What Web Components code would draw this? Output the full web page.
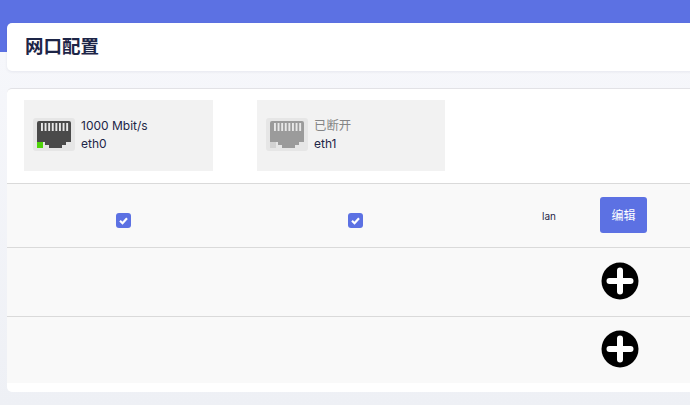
<!DOCTYPE html>
<html lang="zh">
<head>
<meta charset="utf-8">
<title>网口配置</title>
<style>
  html, body { margin: 0; padding: 0; height: 100%; overflow: hidden; }
  body { font-family: Inter, "Noto Sans CJK SC", sans-serif; color: #1d2547; }
</style>
</head>
<body>
<net-page>
  <title-card>网口配置</title-card>
  <main-card>
    <port-strip>
      <port-card speed="1000 Mbit/s" name="eth0"></port-card>
      <port-card speed="已断开" name="eth1" down></port-card>
    </port-strip>
    <config-row style="--row-h: 63px">
      <check-box></check-box>
      <check-box></check-box>
      <zone-label>lan</zone-label>
      <edit-button>编辑</edit-button>
    </config-row>
    <config-row style="--row-h: 68px"><add-button></add-button></config-row>
    <config-row style="--row-h: 66px"><add-button></add-button></config-row>
  </main-card>
</net-page>

<script>
class NetPage extends HTMLElement {
    constructor() {
        super();
        this.attachShadow({ mode: 'open' }).innerHTML = `
            <style>
                :host {
                    display: flex;
                    flex-direction: column;
                    gap: 17px;
                    box-sizing: border-box;
                    width: 690px;
                    height: 405px;
                    padding: 23px 0 0 7px;
                    overflow: hidden;
                    background: linear-gradient(#5c71e3 52px, #f6f7fb 52px, #eef0f5 405px);
                }
            </style>
            <slot></slot>
        `;
    }
}

class TitleCard extends HTMLElement {
    constructor() {
        super();
        this.attachShadow({ mode: 'open' }).innerHTML = `
            <style>
                :host {
                    display: flex;
                    align-items: center;
                    box-sizing: border-box;
                    height: 48px;
                    margin-right: -8px;
                    padding: 0 0 4px 18px;
                    background: #fff;
                    border-radius: 5px;
                    box-shadow: 0 1px 3px rgba(50, 50, 93, 0.08);
                    font-size: 18.5px;
                    font-weight: 700;
                    color: #1d2547;
                }
            </style>
            <slot></slot>
        `;
    }
}

class MainCard extends HTMLElement {
    constructor() {
        super();
        this.attachShadow({ mode: 'open' }).innerHTML = `
            <style>
                :host {
                    display: block;
                    box-sizing: border-box;
                    height: 304px;
                    margin-right: -8px;
                    padding-bottom: 9px;
                    background: #fff;
                    border-top: 1px solid #e2e2e6;
                    border-radius: 5px;
                }
            </style>
            <slot></slot>
        `;
    }
}

class PortStrip extends HTMLElement {
    constructor() {
        super();
        this.attachShadow({ mode: 'open' }).innerHTML = `
            <style>
                :host {
                    display: flex;
                    gap: 44px;
                    padding: 11px 0 12px 17px;
                }
            </style>
            <slot></slot>
        `;
    }
}

class PortCard extends HTMLElement {
    constructor() {
        super();
        const down = this.hasAttribute('down');
        const body = down ? '#9b9b9b' : '#4a4a4a';
        const led = down ? '#d2d2d2' : '#4fd40a';
        const bars = [0, 1, 2, 3, 4, 5, 6, 7]
            .map(i => `<rect x="${8 + i * 3.6}" y="5" width="1.9" height="8" fill="#e8e8e8"/>`)
            .join('');
        this.attachShadow({ mode: 'open' }).innerHTML = `
            <style>
                :host {
                    display: flex;
                    align-items: center;
                    gap: 6px;
                    box-sizing: border-box;
                    width: ${down ? 188 : 189}px;
                    height: 71px;
                    padding: 0 0 2px 9px;
                    background: #f2f2f2;
                }
                svg { display: block; flex: none; }
                .text { display: flex; flex-direction: column; gap: 2px; margin-top: 1px; font-size: 12px; line-height: 16px; }
                .speed { color: ${down ? '#858585' : '#1d2547'}; font-size: ${down ? 12.4 : 12}px; }
                .name { color: #1d2547; }
            </style>
            <svg width="42" height="33" viewBox="0 0 42 33">
                <rect width="42" height="33" rx="3" fill="#e6e6e6"/>
                <path d="M4,5 Q4,3 6,3 H36 Q38,3 38,5 V24 H33 V27 H29 V30 H16 V27 H12 V24 H4 Z" fill="${body}"/>
                ${bars}
                <rect x="4" y="24" width="6" height="6" fill="${led}"/>
            </svg>
            <div class="text">
                <span class="speed">${this.getAttribute('speed')}</span>
                <span class="name">${this.getAttribute('name')}</span>
            </div>
        `;
    }
}

class ConfigRow extends HTMLElement {
    constructor() {
        super();
        this.attachShadow({ mode: 'open' }).innerHTML = `
            <style>
                :host {
                    display: grid;
                    grid-template-columns: 232px 232px 117px 100px;
                    align-items: center;
                    height: var(--row-h);
                    background: #f9f9f9;
                    border-top: 1px solid #dadada;
                }
                ::slotted(add-button), ::slotted(edit-button) { grid-column: 4; }
            </style>
            <slot></slot>
        `;
    }
}

class CheckBox extends HTMLElement {
    constructor() {
        super();
        this.attachShadow({ mode: 'open' }).innerHTML = `
            <style>
                :host { display: flex; justify-content: center; padding-top: 9px; }
                svg { display: block; }
            </style>
            <svg width="15" height="15" viewBox="0 0 15 15">
                <rect width="15" height="15" rx="3" fill="#5c71e3"/>
                <path d="M4 7.8 L6.5 10.2 L11 5.2" fill="none" stroke="#fff" stroke-width="2.2"/>
            </svg>
        `;
    }
}

class ZoneLabel extends HTMLElement {
    constructor() {
        super();
        this.attachShadow({ mode: 'open' }).innerHTML = `
            <style>
                :host {
                    display: block;
                    padding-left: 71px;
                    font-size: 10px;
                    color: #1d2547;
                }
            </style>
            <slot></slot>
        `;
    }
}

class EditButton extends HTMLElement {
    constructor() {
        super();
        this.attachShadow({ mode: 'open' }).innerHTML = `
            <style>
                :host {
                    display: flex;
                    align-items: center;
                    justify-content: center;
                    box-sizing: border-box;
                    width: 47px;
                    height: 36px;
                    margin: -2px 0 0 12px;
                    background: #5c71e3;
                    border-radius: 3px;
                    color: #fff;
                    font-size: 12px;
                }
            </style>
            <slot></slot>
        `;
    }
}

class AddButton extends HTMLElement {
    constructor() {
        super();
        this.attachShadow({ mode: 'open' }).innerHTML = `
            <style>
                :host { display: block; width: 38px; height: 38px; margin: -2px 0 0 13px; }
                svg { display: block; }
            </style>
            <svg width="38" height="38" viewBox="0 0 38 38">
                <circle cx="19" cy="19" r="18.5" fill="#000"/>
                <path d="M19 8.5 V29.5 M8.5 19 H29.5" stroke="#fff" stroke-width="6" stroke-linecap="round"/>
            </svg>
        `;
    }
}

customElements.define('net-page', NetPage);
customElements.define('title-card', TitleCard);
customElements.define('main-card', MainCard);
customElements.define('port-strip', PortStrip);
customElements.define('port-card', PortCard);
customElements.define('config-row', ConfigRow);
customElements.define('check-box', CheckBox);
customElements.define('zone-label', ZoneLabel);
customElements.define('edit-button', EditButton);
customElements.define('add-button', AddButton);
</script>
</body>
</html>
